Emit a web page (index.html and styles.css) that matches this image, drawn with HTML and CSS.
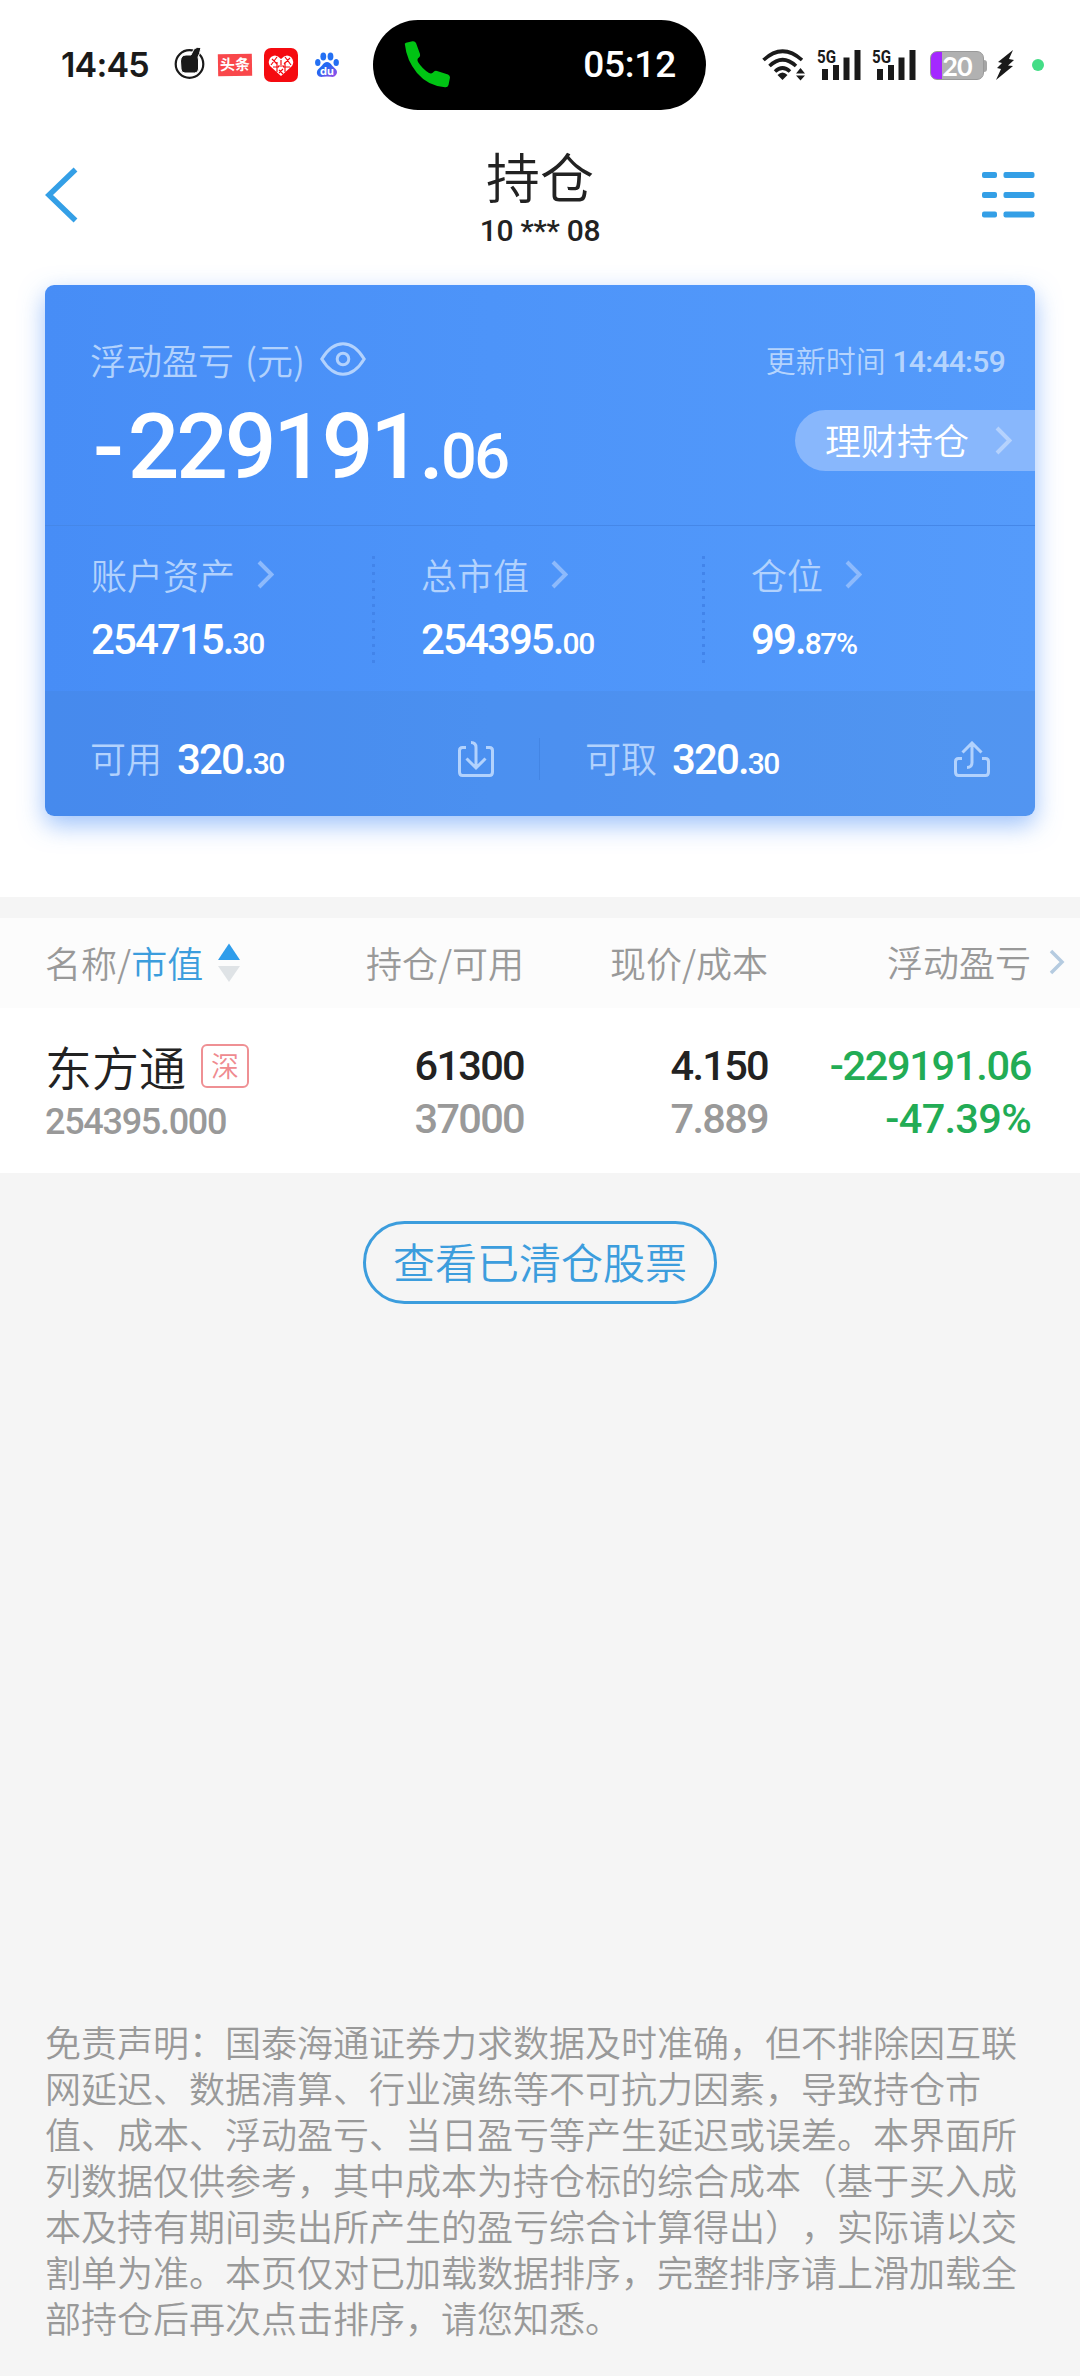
FILE: index.html
```html
<!DOCTYPE html>
<html lang="zh-CN">

<head>
  <meta charset="UTF-8">
  <meta name="viewport" content="width=device-width, initial-scale=1.0">
  <title>持仓</title>
  <link rel="stylesheet" href="styles.css">
</head>

<body>
  <div class="status-bar">
    <span class="clock">14:45</span>
    <div class="app-icons">
      <svg class="app-thumb" width="32" height="34" viewBox="0 0 32 34">
        <circle cx="15.500" cy="18" r="13.800" fill="none" stroke="#1a1a1a" stroke-width="2.200" />
        <path d="M17 9l3-6q3-2.500 7-1.500l-1.500 6-1.500 3.500.5 3v9q0 4-4 4H11q-4 0-4-4l-.500-8q.5-6 5.500-6z" fill="#1a1a1a" stroke="#fff" stroke-width="1" />
      </svg>
      <span class="app-toutiao">头条</span>
      <span class="app-red">
        <svg width="26" height="24" viewBox="0 0 26 24">
          <path d="M13 22L2 12Q-1 7 3 3q5-4 10 2 5-6 10-2 4 4 1 9z" fill="#fff" />
          <path d="M4 5l5 5M9 3l-6 8M5 13h6M9 8v10M13 6v5M17 8v10M15 13h7M17 3l6 8M22 4l-6 6M11 16l4 4M15 15l-4 4M10 12h6" fill="none" stroke="#f50b10" stroke-width="1.200" />
        </svg>
      </span>
      <svg class="app-baidu" width="24" height="26" viewBox="0 0 24 26">
        <defs>
          <linearGradient id="paw" x1="0" y1="0" x2="1" y2="1">
            <stop offset="0.400" stop-color="#2468f2" />
            <stop offset="1" stop-color="#a44ae8" />
          </linearGradient>
        </defs>
        <g fill="#2470f3">
          <ellipse cx="2.800" cy="10.500" rx="2.700" ry="3.600" />
          <ellipse cx="8.300" cy="4.500" rx="2.900" ry="4" />
          <ellipse cx="15.500" cy="4.500" rx="2.900" ry="4" />
          <ellipse cx="21.200" cy="10.500" rx="2.700" ry="3.600" />
        </g>
        <path d="M12 10q3 0 5 3.500l4 4q2 2.500 0 5.500-2 2.500-5 1.800-4-.8-8 0-4 .7-5.500-1.800-1.500-3 .5-5.500l4-4Q9 10 12 10z" fill="url(#paw)" />
        <text x="12" y="22.500" text-anchor="middle" class="paw-text">du</text>
      </svg>
    </div>

    <div class="call-pill">
      <svg width="48" height="48" viewBox="0 0 48 48">
        <path d="M2 4Q1 2.500 3 1.700L9.500.3Q12 0 13 2l4 11q.6 2-1 3.500-2.500 1.500-1 4.500 4.500 7 11 11 2.500 1.200 4-.6 1.500-2 4-1.400L45 33.500q2 .8 2 3l-1.500 7.500q-.8 2.500-3.500 2.200Q25 45 14 32 3.500 19 2 4z" fill="#00c414" />
      </svg>
      <span class="call-time">05:12</span>
    </div>

    <div class="system-icons">
      <svg class="wifi" width="44" height="32" viewBox="0 0 44 32">
        <g fill="none" stroke="#1a1a1a" stroke-width="3.600">
          <path d="M1.500 11Q20.500-6.500 40 11" />
          <path d="M7.500 17Q20.500 4.500 34 17" />
          <path d="M13 22.500q7.500-7 15 0" />
        </g>
        <path d="M20.500 31l-5-5q5-5 10 0z" fill="#1a1a1a" />
        <path d="M38.500 19l4.500 5.500h-9zM38.500 31.500L43 26.500h-9z" fill="#1a1a1a" />
      </svg>
      <svg class="signal" width="44" height="32" viewBox="0 0 44 32">
        <text x="0" y="13.500" class="net-text" textLength="19" lengthAdjust="spacingAndGlyphs">5G</text>
        <path d="M5 20h6v11H5zM16 16h6v15h-6zM26.500 8.500h6V31h-6zM37.500 1h6v30h-6z" fill="#1a1a1a" />
      </svg>
      <svg class="signal" width="44" height="32" viewBox="0 0 44 32">
        <text x="0" y="13.500" class="net-text" textLength="19" lengthAdjust="spacingAndGlyphs">5G</text>
        <path d="M5 20h6v11H5zM16 16h6v15h-6zM26.500 8.500h6V31h-6zM37.500 1h6v30h-6z" fill="#1a1a1a" />
      </svg>
      <div class="battery"><span>20</span></div>
      <svg class="bolt" width="18" height="30" viewBox="0 0 18 30">
        <path d="M17 0L2 12l4 1-5 5 4 1-5 11 17-14-5-.5 6-5.500-5-1z" fill="#1a1a1a" />
      </svg>
      <span class="privacy-dot"></span>
    </div>
  </div>

  <div class="header">
    <svg class="back" width="34" height="56" viewBox="0 0 34 56">
      <path d="M30.500 2.500L4 28l26.500 25.500" fill="none" stroke="#349fe6" stroke-width="5.500" />
    </svg>
    <div class="title">
      <h1>持仓</h1>
      <p>10 *** 08</p>
    </div>
    <svg width="53" height="46" viewBox="0 0 53 46">
      <g fill="#349fe6">
        <rect x="0" y="0" width="15" height="6" rx="2" />
        <rect x="21.500" y="0" width="31" height="6" rx="2" />
        <rect x="0" y="20" width="15" height="6" rx="2" />
        <rect x="21.500" y="20" width="31" height="6" rx="2" />
        <rect x="0" y="39.500" width="15" height="6" rx="2" />
        <rect x="21.500" y="39.500" width="31" height="6" rx="2" />
      </g>
    </svg>
  </div>

  <div class="card">
    <div class="card-top">
      <div class="profit">
        <div class="label">浮动盈亏<span class="unit">(元)</span>
          <svg width="46" height="34" viewBox="0 0 46 34">
            <g fill="none" stroke="#b2d2fd" stroke-width="3">
              <path d="M1.800 17Q11 1.800 23 1.800T44.200 17Q35 32.200 23 32.200T1.800 17z" />
              <circle cx="23" cy="17" r="5.800" />
            </g>
          </svg>
        </div>
        <div class="profit-value"><span class="minus">-</span>229191.<small>06</small></div>
      </div>
      <div class="card-side">
        <div class="update">更新时间 <span>14:44:59</span></div>
        <div class="wealth"><span>理财持仓</span>
          <svg class="chevron" width="17" height="29" viewBox="0 0 17 29">
            <path d="M2 2l12.500 12.500L2 27" />
          </svg>
        </div>
      </div>
    </div>

    <div class="card-stats">
      <div class="stat">
        <div class="label">账户资产
          <svg class="chevron" width="17" height="29" viewBox="0 0 17 29">
            <path d="M2 2l12.500 12.500L2 27" />
          </svg>
        </div>
        <div class="value">254715.<small>30</small></div>
      </div>
      <div class="stat">
        <div class="label">总市值
          <svg class="chevron" width="17" height="29" viewBox="0 0 17 29">
            <path d="M2 2l12.500 12.500L2 27" />
          </svg>
        </div>
        <div class="value">254395.<small>00</small></div>
      </div>
      <div class="stat">
        <div class="label">仓位
          <svg class="chevron" width="17" height="29" viewBox="0 0 17 29">
            <path d="M2 2l12.500 12.500L2 27" />
          </svg>
        </div>
        <div class="value">99.<small>87%</small></div>
      </div>
    </div>

    <div class="card-cash">
      <div class="cash">
        <span class="label">可用</span>
        <span class="value">320.<small>30</small></span>
        <svg width="36" height="36" viewBox="0 0 36 36">
          <path d="M8 6.500H4.500q-3 0-3 3V31q0 3.500 3 3.500h27q3 0 3-3.500V9.500q0-3-3-3H28M13 1.500q5 0 5 5V26M8.500 17.500L18 27l9.500-9.500" />
        </svg>
      </div>
      <div class="cash">
        <span class="label">可取</span>
        <span class="value">320.<small>30</small></span>
        <svg width="36" height="36" viewBox="0 0 36 36">
          <path d="M8 17.500H4.500q-3 0-3 3V31q0 3.500 3 3.500h27q3 0 3-3.500V20.500q0-3-3-3H28M13 26.500q5 0 5-5V2M8.500 11.500L18 2l9.500 9.500" />
        </svg>
      </div>
    </div>
  </div>

  <div class="holdings">
    <div class="row table-head">
      <div class="name"><span>名称/<span class="active">市值</span></span>
        <svg width="24" height="40" viewBox="0 0 24 40">
          <path d="M12 1.500L23 18H1z" fill="#2f9deb" />
          <path d="M12 40L23 24H1z" fill="#dfe3e6" />
        </svg>
      </div>
      <div>持仓/可用</div>
      <div>现价/成本</div>
      <div class="last">浮动盈亏</div>
      <svg class="more" width="16" height="26" viewBox="0 0 16 26">
        <path d="M2 2l11 11L2 24" fill="none" stroke="#b5cbe0" stroke-width="3.500" />
      </svg>
    </div>
    <div class="row stock">
      <div class="name">
        <div class="stock-name"><span>东方通</span><span class="badge">深</span></div>
        <div class="market-value">254395.000</div>
      </div>
      <div class="figures">
        <div>61300</div>
        <div class="muted">37000</div>
      </div>
      <div class="figures">
        <div>4.150</div>
        <div class="muted">7.889</div>
      </div>
      <div class="figures loss">
        <div>-229191.06</div>
        <div class="percent">-47.39%</div>
      </div>
    </div>
  </div>

  <button class="history-button">查看已清仓股票</button>

  <p class="disclaimer">
    免责声明：国泰海通证券力求数据及时准确，但不排除因互联<br>
    网延迟、数据清算、行业演练等不可抗力因素，导致持仓市<br>
    值、成本、浮动盈亏、当日盈亏等产生延迟或误差。本界面所<br>
    列数据仅供参考，其中成本为持仓标的综合成本（基于买入成<br>
    本及持有期间卖出所产生的盈亏综合计算得出），实际请以交<br>
    割单为准。本页仅对已加载数据排序，完整排序请上滑加载全<br>
    部持仓后再次点击排序，请您知悉。
  </p>
</body>

</html>
```

FILE: styles.css
```css
* {
  box-sizing: border-box;
}

/* white sheet down to the holdings list, grey below it */
body {
  width: 1080px;
  height: 2376px;
  margin: 0;
  display: flex;
  flex-direction: column;
  background: #f5f5f5 linear-gradient(#fff, #fff) 0 0 / 100% 897px no-repeat;
  color: #222;
  font-family: "Noto Sans CJK SC", sans-serif;
  font-weight: 350;
  font-size: 36px;
  text-spacing-trim: space-all;
  overflow: hidden;
}

svg {
  display: block;
  flex: none;
}

h1,
p {
  margin: 0;
}

/* status bar */
.status-bar {
  height: 130px;
  flex: none;
  display: flex;
  align-items: center;
  color: #1a1a1a;
}

.clock {
  width: 113px;
  margin-left: 61px;
  font: 600 34px/40px Inter, sans-serif;
  letter-spacing: -0.8px;
}

.app-icons {
  width: 199px;
  display: flex;
  align-items: center;
}

.app-thumb {
  margin-top: -5px;
}

.app-toutiao {
  width: 34px;
  height: 22px;
  margin-left: 12px;
  background-color: #f9474b;
  color: #fff;
  font-size: 15px;
  font-weight: 700;
  line-height: 20px;
  text-align: center;
  transform: rotate(-1deg);
}

.app-red {
  width: 34px;
  height: 34px;
  margin-left: 12px;
  padding: 6px 4px;
  border-radius: 7px;
  background-color: #f50b10;
}

.app-baidu {
  margin-left: 17px;
}

.paw-text {
  font: 700 11px Inter, sans-serif;
  fill: #fff;
}

.call-pill {
  width: 333px;
  height: 90px;
  flex: none;
  display: flex;
  align-items: center;
  justify-content: space-between;
  padding: 0 30px;
  border-radius: 45px;
  background-color: #000;
}

.call-time {
  color: #fff;
  font: 500 37px/40px Roboto, sans-serif;
  letter-spacing: -0.2px;
}

.system-icons {
  margin-left: 56px;
  display: flex;
  align-items: center;
}

.signal {
  margin-left: 11px;
  overflow: visible;
}

.net-text {
  font: 700 18px Roboto, sans-serif;
  fill: #1a1a1a;
}

.battery {
  width: 54px;
  height: 29px;
  margin-left: 14px;
  border: 1px solid #999;
  border-radius: 7px;
  background: linear-gradient(to right, #a428ff 11px, #b1b1b1 11px);
  color: #fff;
  font: 700 27px/27px Lato, sans-serif;
  letter-spacing: -1px;
  text-align: center;
  position: relative;
}

.battery::after {
  content: "";
  width: 3px;
  height: 12px;
  border-radius: 0 3px 3px 0;
  background-color: #a5a5a5;
  position: absolute;
  top: 8px;
  right: -4px;
}

.bolt {
  margin-left: 12px;
}

.privacy-dot {
  width: 12px;
  height: 12px;
  margin-left: 18px;
  border-radius: 50%;
  background-color: #43dd86;
}

/* page header */
.header {
  height: 155px;
  flex: none;
  display: flex;
  justify-content: space-between;
  align-items: center;
  padding: 0 45px 25px;
}

.back {
  margin-right: 19px;
}

.title {
  padding-top: 3px;
  text-align: center;
}

.title h1 {
  font-size: 54px;
  font-weight: 350;
  line-height: 68px;
}

.title p {
  font: 500 30px/42px Roboto, sans-serif;
  letter-spacing: -0.3px;
}

/* asset card */
.card {
  height: 531px;
  flex: none;
  margin: 0 45px;
  border-radius: 9px;
  background: linear-gradient(to right, #478df6, #4d94f9 45%, #559bfb);
  box-shadow: 0 9px 24px rgba(76, 144, 248, 0.55);
  color: #fff;
}

.label {
  display: flex;
  align-items: center;
  color: #b2d2fd;
  line-height: 40px;
}

.card-top {
  height: 241px;
  display: flex;
  justify-content: space-between;
  padding: 54px 0 0 45px;
  border-bottom: 1px solid #4587e8;
}

.unit {
  margin: 0 15px 0 11px;
}

.profit-value {
  margin-top: 23px;
  padding-left: 3px;
  font: 500 91px/90px Roboto, sans-serif;
  letter-spacing: -3.2px;
}

.minus {
  margin-right: 7px;
}

.profit-value small {
  font-size: 63px;
  letter-spacing: -2.5px;
}

.card-side {
  display: flex;
  flex-direction: column;
  align-items: flex-end;
}

.update {
  padding-right: 30px;
  color: #b5d4fd;
  font-size: 30px;
  line-height: 40px;
  white-space: pre;
}

.update span {
  font-family: Roboto, sans-serif;
  font-weight: 500;
  letter-spacing: -0.7px;
}

.wealth {
  width: 240px;
  height: 61px;
  margin-top: 28px;
  display: flex;
  align-items: center;
  justify-content: space-between;
  padding: 0 23px 0 30px;
  border-radius: 31px 0 0 31px;
  background-color: #88b7fc;
  line-height: 56px;
}

.wealth span {
  padding-bottom: 3px;
}

.chevron {
  fill: none;
  stroke: #8dbafc;
  stroke-width: 4;
}

.wealth .chevron {
  stroke: #b5d2fd;
}

.card-stats {
  height: 165px;
  display: grid;
  grid-template-columns: repeat(3, 1fr);
  padding: 30px 0 29px;
}

.stat {
  padding-left: 46px;
}

.stat:not(:last-child) {
  background: repeating-linear-gradient(to bottom, #4284ea 0, #4284ea 3px, transparent 3px, transparent 8px) right / 3px 100% no-repeat;
}

.stat .label {
  margin-top: -2px;
}

.stat .chevron {
  margin-left: 22px;
}

.value {
  font: 500 42px/46px Roboto, sans-serif;
  letter-spacing: -1.9px;
}

.value small {
  font-size: 30px;
  letter-spacing: -1.4px;
}

.stat .value {
  margin-top: 23px;
}

.card-cash {
  height: 125px;
  display: grid;
  grid-template-columns: 1fr 1fr;
  align-items: center;
  padding-top: 10px;
  border-radius: 0 0 9px 9px;
  background-color: rgba(70, 120, 190, 0.15);
}

.cash {
  height: 42px;
  display: flex;
  align-items: center;
  gap: 15px;
  padding: 0 45px;
}

.cash:first-child {
  border-right: 1px solid #4385e4;
}

.cash .label {
  padding-bottom: 4px;
}

.cash .value {
  padding-top: 6px;
}

.cash svg {
  margin-left: auto;
  fill: none;
  stroke: #b2d2fd;
  stroke-width: 3;
}

/* holdings table */
.holdings {
  flex: none;
  padding-top: 102px;
}

.row {
  display: grid;
  grid-template-columns: 240px 239px 244px 263px 1fr;
  padding-left: 45px;
  text-align: right;
}

.row .name {
  text-align: left;
}

.table-head {
  height: 90px;
  align-items: center;
  padding-bottom: 2px;
  background-color: #fcfcfc;
  color: #999;
  line-height: 40px;
}

.table-head .name {
  display: flex;
  align-items: center;
}

.table-head .name svg {
  margin-left: 14px;
}

.active {
  color: #3c9ddd;
}

.last {
  margin-top: -3px;
}

.more {
  margin-left: 18px;
}

.stock {
  height: 165px;
  padding-top: 34px;
  background-color: #fff;
}

.figures {
  margin-top: -3px;
  font: 500 41.500px/53px Roboto, sans-serif;
  letter-spacing: -1.7px;
}

.stock-name {
  height: 48px;
  display: flex;
  align-items: center;
  font-size: 47px;
  line-height: 44px;
}

.badge {
  width: 48px;
  height: 44px;
  margin-left: 15px;
  border: 2px solid #ef9094;
  border-radius: 6px;
  color: #ef8a8f;
  font-size: 28px;
  line-height: 38px;
  text-align: center;
}

.market-value {
  margin-top: 10px;
  color: #999;
  font: 500 36px/44px Roboto, sans-serif;
  letter-spacing: -1.3px;
}

.muted {
  color: #999;
}

.loss {
  color: #22ac55;
  letter-spacing: -1.3px;
}

.percent {
  letter-spacing: -0.7px;
}

.history-button {
  width: 354px;
  height: 83px;
  flex: none;
  align-self: center;
  margin-top: 48px;
  padding: 0 0 4px;
  border: 3px solid #3c9ddd;
  border-radius: 42px;
  background: none;
  color: #3c9ddd;
  font: inherit;
  font-size: 42px;
  line-height: 72px;
}

.disclaimer {
  margin-top: auto;
  padding: 0 0 36px 45px;
  color: #999;
  line-height: 46px;
  white-space: nowrap;
}
```
